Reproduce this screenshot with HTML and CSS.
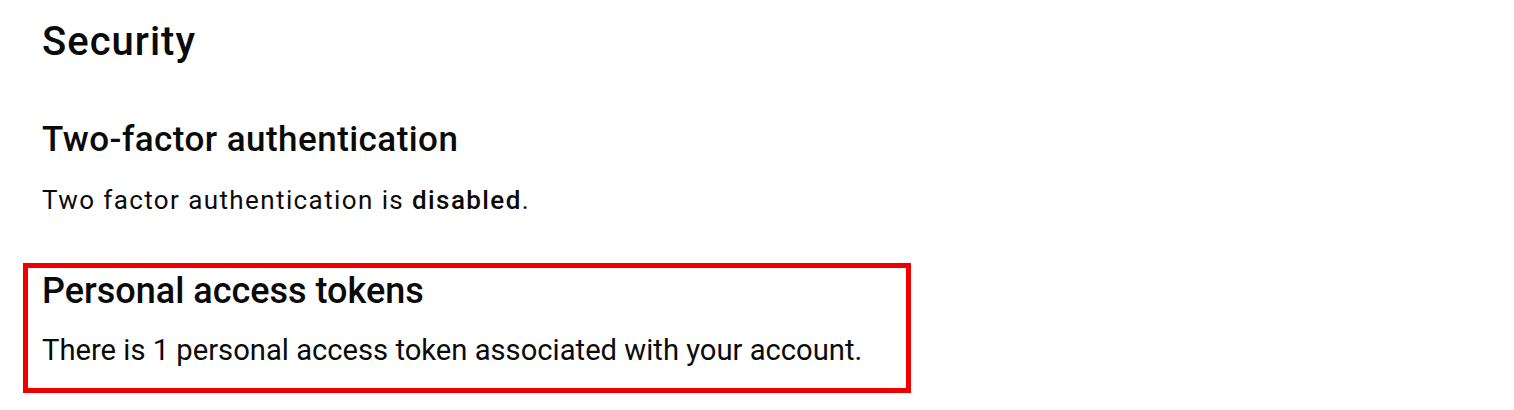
FILE: index.html
```html
<!DOCTYPE html>
<html lang="en">
<head>
<meta charset="utf-8">
<link rel="stylesheet" href="styles.css">
<title>Security</title>
</head>
<body>
<main class="page">
  <h1 class="title">Security</h1>
  <section class="section">
    <h2 class="section-title">Two-factor authentication</h2>
    <p class="section-text">Two factor authentication is <strong>disabled</strong>.</p>
  </section>
  <section class="section highlight">
    <h2 class="hl-title">Personal access tokens</h2>
    <p class="hl-text">There is 1 personal access token associated with your account.</p>
  </section>
</main>
</body>
</html>
```
FILE: styles.css
```css
html, body {
  margin: 0;
  padding: 0;
  background: #ffffff;
}
body {
  font-family: Roboto, "Liberation Sans", sans-serif;
  color: #0a0a0a;
}
.page {
  display: flex;
  flex-direction: column;
  align-items: flex-start;
  padding: 20px 0 0 42px;
}
.title {
  margin: 0;
  font-size: 40px;
  line-height: 44px;
  font-weight: 500;
  letter-spacing: 1px;
}
.section {
  display: flex;
  flex-direction: column;
}
.section-title {
  margin: 55px 0 0;
  font-size: 35px;
  line-height: 42px;
  font-weight: 500;
  letter-spacing: 0.45px;
}
.section-text {
  margin: 24px 0 0;
  font-size: 26px;
  line-height: 30px;
  letter-spacing: 1.4px;
}
.section-text strong {
  font-weight: 500;
}
.highlight {
  box-sizing: border-box;
  width: 888px;
  margin: 48px 0 0 -19px;
  padding: 2px 20px 21px 14px;
  border: 5px solid #ee0000;
}
.hl-title {
  margin: 0;
  font-size: 36px;
  line-height: 42px;
  font-weight: 500;
}
.hl-text {
  margin: 21px 0 0;
  font-size: 29.2px;
  line-height: 34px;
  font-weight: 400;
}
```
